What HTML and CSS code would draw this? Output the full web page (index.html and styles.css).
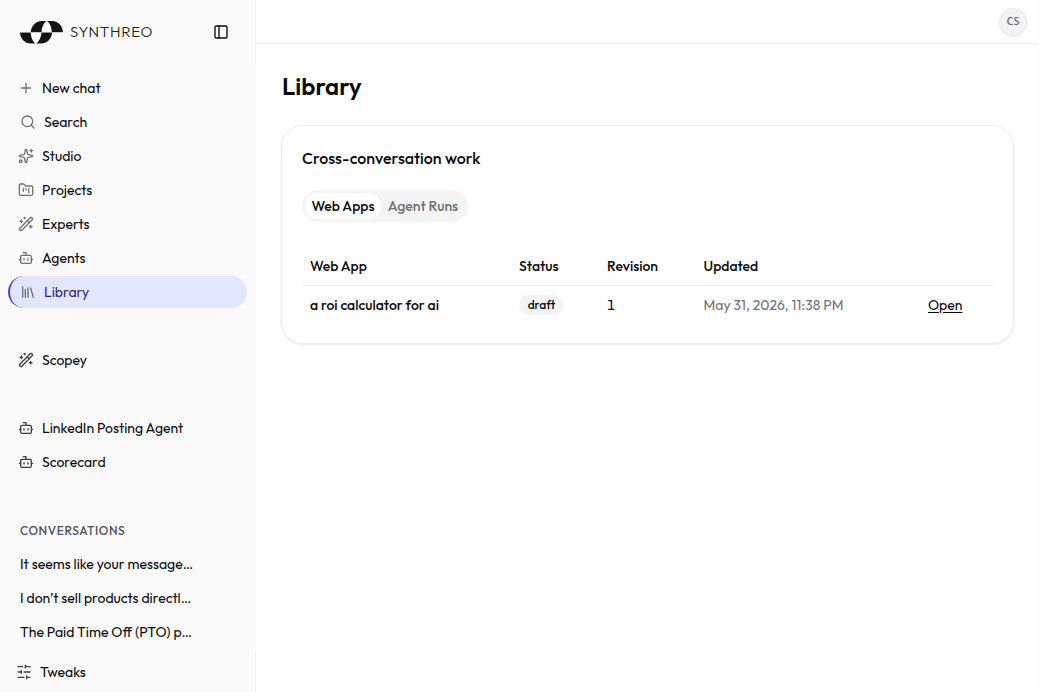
FILE: index.html
```
<!DOCTYPE html>
<html lang="en">
  <head>
    <meta charset="utf-8" />
    <title>Library</title>
    <meta name="viewport" content="width=device-width, initial-scale=1" />
    <link rel="stylesheet" href="styles.css" />
  </head>
  <body>
    <!-- Shared icons -->
    <svg class="sprite">
      <symbol id="bot" viewBox="0 0 24 24">
        <path d="M12 8V4H8M2 14h2M20 14h2M15 13v2M9 13v2" />
        <rect x="4" y="8" width="16" height="12" rx="2" />
      </symbol>
      <symbol id="wand" viewBox="0 0 24 24">
        <path d="m21.640 3.640-1.280-1.280a1.210 1.210 0 0 0-1.720 0L2.360 18.640a1.210 1.210 0 0 0 0 1.720l1.280 1.280a1.200 1.200 0 0 0 1.720 0L21.640 5.360a1.200 1.200 0 0 0 0-1.720M14 7l3 3M5 6v4M19 14v4M10 2v2M7 8H3M21 16h-4M11 3H9" />
      </symbol>
    </svg>

    <aside class="sidebar">
      <div class="sidebar-header">
        <svg class="logo" viewBox="0 0 43 23">
          <path d="M10.7 11C11.500 4.500 16 0 22 0H26C23 3 21.800 7 21.5 11Z" />
          <path d="M27 0H32C38.500 0 42.700 5 43 11H31.800C31.5 6 30 2 27 0Z" />
          <path d="M0 11.500H10.7C11 16 12.500 20.5 15.500 22.500H11C4.500 22.500 .3 17.5 0 11.500Z" />
          <path d="M21.5 11.500H32.200C31.500 18 27 22.500 21 22.500H16.500C19.500 20 21.200 16 21.5 11.500Z" />
          <path class="seam" d="M0 11h43v.5H0Z" />
        </svg>
        <span class="brand">SYNTHREO</span>
        <button class="toggle" aria-label="Toggle sidebar">
          <svg class="icon" viewBox="0 0 24 24">
            <rect x="3" y="3" width="18" height="18" rx="2" />
            <path d="M9 3v18" />
          </svg>
        </button>
      </div>

      <nav class="menu">
        <a class="item">
          <svg class="icon" viewBox="0 0 24 24"><path d="M5 12h14M12 5v14" /></svg>
          New chat
        </a>
        <a class="item indent">
          <svg class="icon" viewBox="0 0 24 24"><circle cx="11" cy="11" r="8" /><path d="m21 21-4.300-4.300" /></svg>
          Search
        </a>
        <a class="item">
          <svg class="icon" viewBox="0 0 24 24">
            <path d="M11.017 2.814a1 1 0 0 1 1.966 0l1.051 5.558a2 2 0 0 0 1.594 1.594l5.558 1.051a1 1 0 0 1 0 1.966l-5.558 1.051a2 2 0 0 0-1.594 1.594l-1.051 5.558a1 1 0 0 1-1.966 0l-1.051-5.558a2 2 0 0 0-1.594-1.594l-5.558-1.051a1 1 0 0 1 0-1.966l5.558-1.051a2 2 0 0 0 1.594-1.594zM20 2v4M22 4h-4" />
            <circle cx="4" cy="20" r="2" />
          </svg>
          Studio
        </a>
        <a class="item">
          <svg class="icon" viewBox="0 0 24 24">
            <path d="M4 20h16a2 2 0 0 0 2-2V8a2 2 0 0 0-2-2h-7.930a2 2 0 0 1-1.660-.9l-.82-1.200A2 2 0 0 0 7.930 3H4a2 2 0 0 0-2 2v13c0 1.100.9 2 2 2ZM8 10v4M12 10v2M16 10v6" />
          </svg>
          Projects
        </a>
        <a class="item">
          <svg class="icon"><use href="#wand" /></svg>
          Experts
        </a>
        <a class="item">
          <svg class="icon"><use href="#bot" /></svg>
          Agents
        </a>
        <a class="item active">
          <svg class="icon" viewBox="0 0 24 24"><path d="m16 6 4 14M12 6v14M8 8v12M4 4v16" /></svg>
          Library
        </a>
      </nav>

      <nav class="menu pinned">
        <a class="item">
          <svg class="icon"><use href="#wand" /></svg>
          Scopey
        </a>
      </nav>

      <nav class="menu pinned">
        <a class="item">
          <svg class="icon"><use href="#bot" /></svg>
          LinkedIn Posting Agent
        </a>
        <a class="item">
          <svg class="icon"><use href="#bot" /></svg>
          Scorecard
        </a>
      </nav>

      <div class="conversations">
        <h2>CONVERSATIONS</h2>
        <a>It seems like your message…</a>
        <a>I don’t sell products directl…</a>
        <a>The Paid Time Off (PTO) p…</a>
      </div>

      <div class="sidebar-footer">
        <svg class="icon sliders" viewBox="0 0 24 24">
          <path d="M21 4h-7M10 4H3M21 12h-9M8 12H3M21 20h-5M12 20H3M14 2v4M8 10v4M16 18v4" />
        </svg>
        Tweaks
      </div>
    </aside>

    <main class="main">
      <header class="topbar">
        <div class="avatar">CS</div>
      </header>

      <section class="content">
        <h1>Library</h1>

        <div class="card">
          <h3>Cross-conversation work</h3>

          <div class="tabs">
            <button class="tab selected">Web Apps</button>
            <button class="tab">Agent Runs</button>
          </div>

          <table class="apps">
            <thead>
              <tr>
                <th class="col-app">Web App</th>
                <th class="col-status">Status</th>
                <th class="col-revision">Revision</th>
                <th class="col-updated">Updated</th>
                <th></th>
              </tr>
            </thead>
            <tbody>
              <tr>
                <td class="name">a roi calculator for ai</td>
                <td><span class="badge">draft</span></td>
                <td class="revision">1</td>
                <td class="date">May 31, 2026, 11:38 PM</td>
                <td><a class="open">Open</a></td>
              </tr>
            </tbody>
          </table>
        </div>
      </section>
    </main>
  </body>
</html>
```
FILE: styles.css
```
* {
  box-sizing: border-box;
}

body {
  margin: 0;
  display: flex;
  height: 692px;
  overflow: hidden;
  font-family: Outfit, Lato, sans-serif;
  font-size: 14px;
  line-height: 20px;
  color: #0a0a0a;
  background: #fff;
}

h1,
h2,
h3 {
  margin: 0;
}

button {
  border: 0;
  padding: 0;
  background: none;
  font: inherit;
  color: inherit;
}

.sprite {
  display: none;
}

.icon {
  width: 16px;
  height: 16px;
  flex: none;
  display: block;
  fill: none;
  stroke: currentColor;
  stroke-width: 2;
  stroke-linecap: round;
  stroke-linejoin: round;
}

/* Sidebar */
.sidebar {
  width: 256px;
  flex: none;
  display: flex;
  flex-direction: column;
  background: #fafafa;
}

.sidebar-header {
  height: 64px;
  flex: none;
  display: flex;
  align-items: center;
  padding: 0 26px 0 20px;
  border-right: 1px solid #f0f0f0;
}

.logo {
  width: 43px;
  height: 23px;
  margin-top: 1px;
  fill: #141414;
}

.seam {
  fill: #9a9a9a;
}

.brand {
  margin-left: 7px;
  font-size: 15px;
  font-weight: 300;
  letter-spacing: 0.7px;
  color: #222;
}

.toggle {
  margin-left: auto;
}

.menu {
  display: flex;
  flex-direction: column;
  gap: 2px;
  padding: 8px 9px 0 8px;
}

.pinned {
  padding-top: 36px;
}

.item {
  height: 32px;
  display: flex;
  align-items: center;
  gap: 8px;
  padding-left: 10px;
  white-space: nowrap;
}

.indent {
  padding-left: 12px;
}

.item .icon {
  color: #71717a;
}

.pinned .icon {
  color: #3f3f46;
}

.active {
  border-left: 2px solid #4f39f6;
  border-radius: 16px;
  background: #e2e7ff;
  color: #3a1c8c;
}

.conversations {
  display: flex;
  flex-direction: column;
  gap: 2px;
  padding: 37px 20px 0;
}

.conversations h2 {
  height: 31px;
  line-height: 31px;
  font-size: 12px;
  font-weight: 500;
  letter-spacing: 0.6px;
  color: #52525b;
}

.conversations a {
  line-height: 32px;
  white-space: nowrap;
}

.sidebar-footer {
  height: 40px;
  margin-top: auto;
  display: flex;
  align-items: center;
  gap: 8px;
  padding-left: 16px;
  border-right: 1px solid #f0f0f0;
}

.sliders {
  color: #3f3f46;
}

/* Main area */
.main {
  flex: 1;
  border-right: 1px solid #fafafa;
}

.topbar {
  height: 44px;
  display: flex;
  align-items: center;
  justify-content: flex-end;
  padding-right: 11px;
  border-bottom: 1px solid #f0f0f0;
}

.avatar {
  width: 28px;
  height: 28px;
  margin-top: 1px;
  border: 1px solid #e8e8e8;
  border-radius: 50%;
  background: #f4f4f5;
  box-shadow: 0 1px 2px rgba(0, 0, 0, 0.06);
  font: 600 11px/24px "Open Sans", sans-serif;
  text-align: center;
  color: #6b6b76;
}

.content {
  padding: 26px 24px 0 25px;
}

h1 {
  font-size: 24px;
  line-height: 32px;
  font-weight: 600;
  padding-left: 1px;
}

.card {
  height: 219px;
  margin-top: 23px;
  padding: 20px 20px 0;
  border: 1px solid #ebebeb;
  border-radius: 22px;
  box-shadow: 0 1px 2px rgba(0, 0, 0, 0.1);
}

h3 {
  font-size: 16px;
  line-height: 24px;
  font-weight: 500;
}

.tabs {
  width: 166px;
  height: 32px;
  margin-top: 20px;
  display: flex;
  padding: 3px;
  border-radius: 16px;
  background: #f4f4f4;
}

.tab {
  flex: 1;
  display: flex;
  align-items: center;
  justify-content: center;
  border-radius: 13px;
  font-weight: 500;
  color: #6f6f78;
}

.selected {
  flex: none;
  width: 76px;
  background: #fff;
  color: #0a0a0a;
}

.apps {
  width: 691px;
  margin-top: 24px;
  table-layout: fixed;
  border-spacing: 0;
}

.apps th,
.apps td {
  height: 37px;
  padding: 0 8px;
  text-align: left;
  font-weight: 400;
}

.apps th {
  height: 40px;
  padding-top: 1px;
  border-bottom: 1px solid #ebebeb;
}

.apps th,
.apps .name {
  font-weight: 500;
}

.col-app {
  width: 209px;
}

.col-status {
  width: 88px;
}

.col-revision {
  width: 96.5px;
}

.col-updated {
  width: 224.5px;
}

.badge {
  display: flex;
  align-items: center;
  justify-content: center;
  width: 45px;
  height: 20px;
  border-radius: 10px;
  background: #f4f4f4;
  font-size: 12px;
  font-weight: 500;
}

.revision {
  font-variant-numeric: tabular-nums;
}

.apps .date {
  color: #71717a;
}

.open {
  text-decoration: underline;
  text-underline-offset: 2px;
}
```
